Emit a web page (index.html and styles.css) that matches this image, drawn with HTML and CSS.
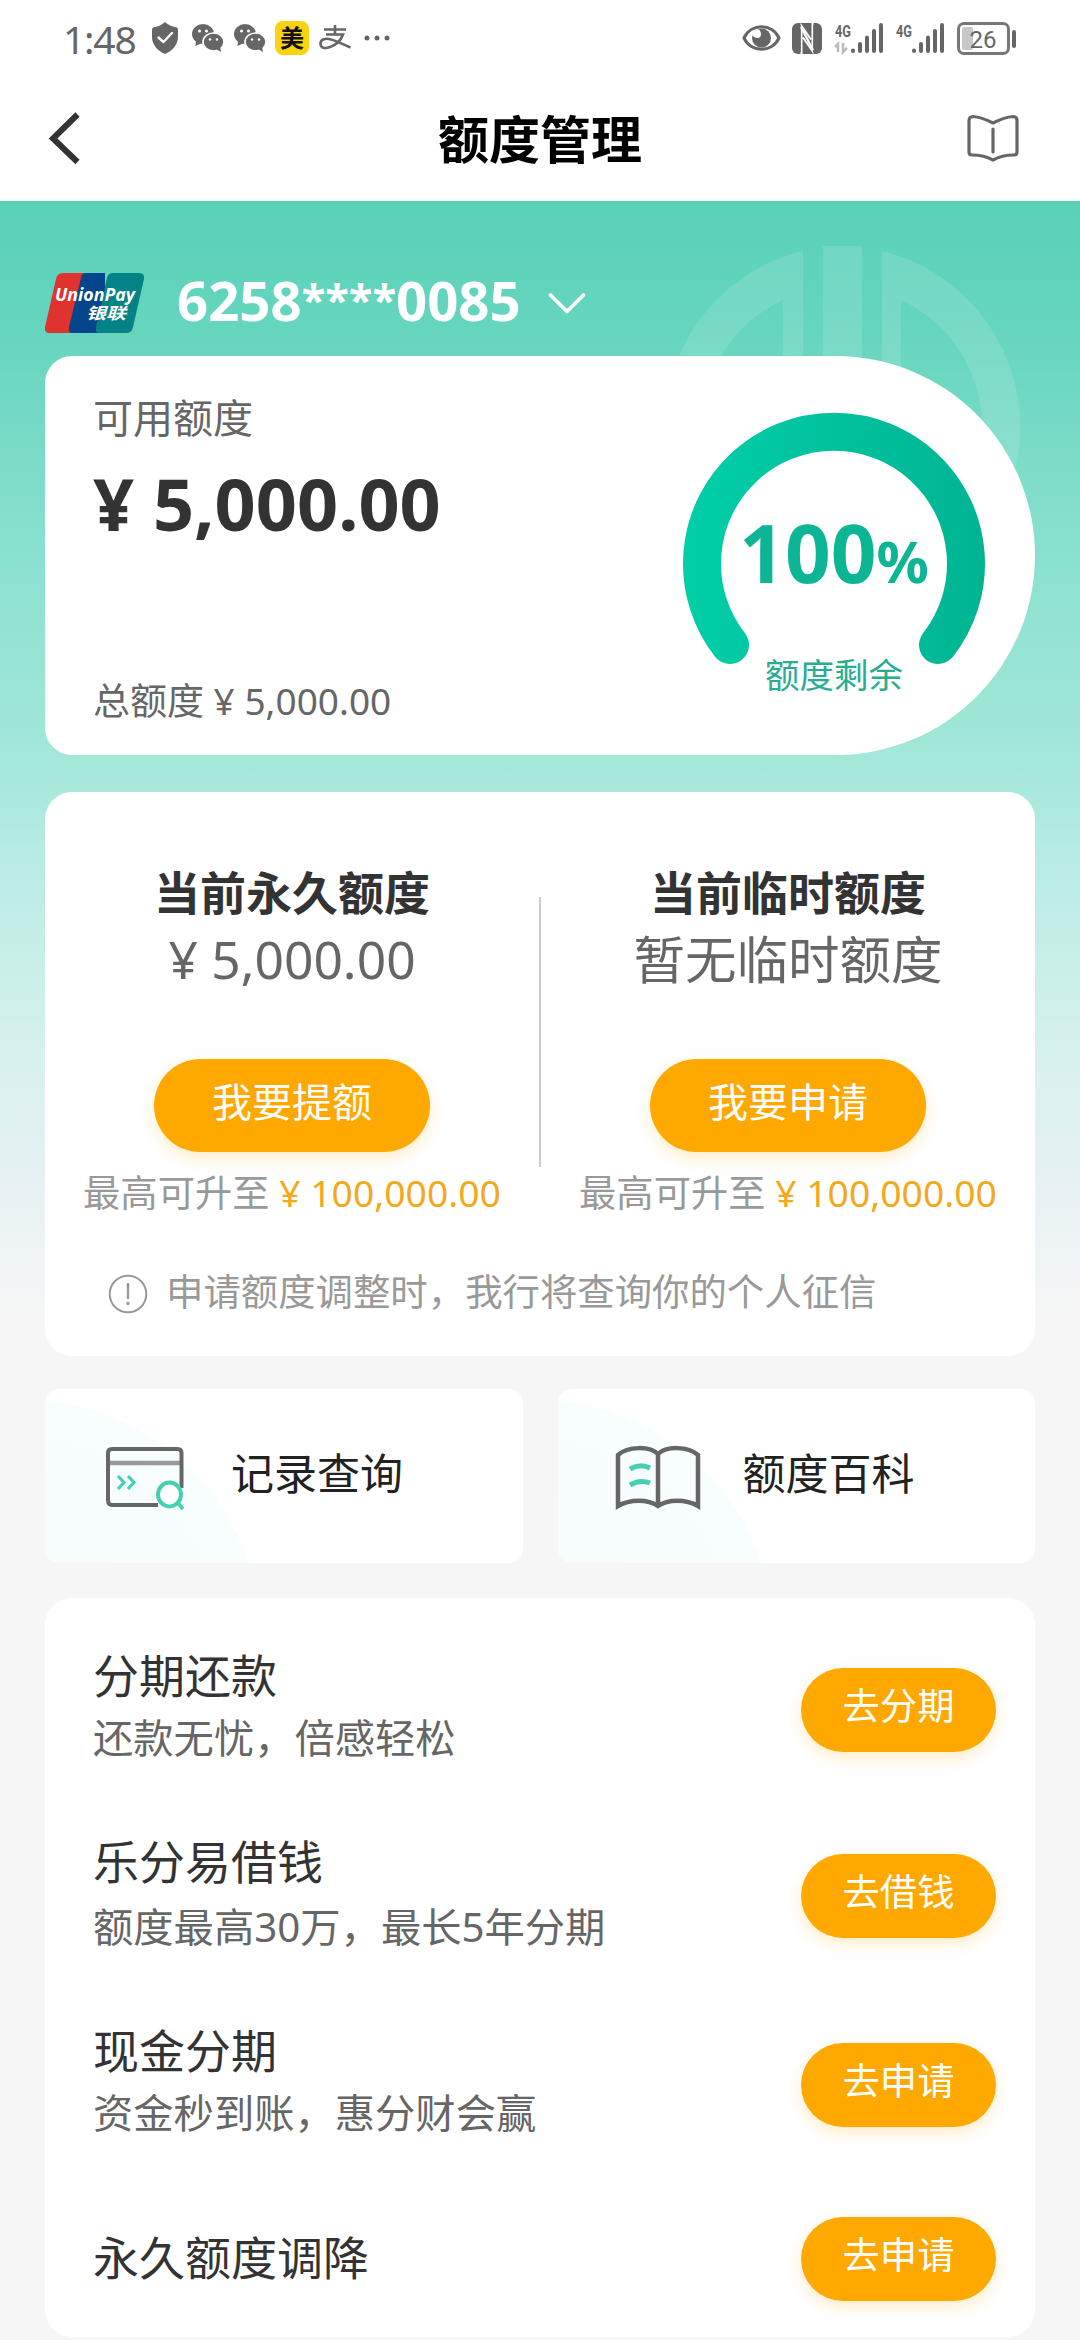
FILE: index.html
```html
<!DOCTYPE html>
<html lang="zh-CN">
<head>
<meta charset="utf-8">
<meta name="viewport" content="width=device-width">
<title>额度管理</title>
<link rel="stylesheet" href="styles.css">
</head>
<body>
<div class="page">
  <header class="top">
    <div class="status">
      <div class="status-left">
        <span class="time">1:48</span>
        <svg class="i-shield" width="26" height="32" viewBox="0 0 26 32"><path d="M13 0C16 3 21 5 25 5.500Q26 6 26 8V15C26 23 20 29 13 32C6 29 0 23 0 15V8Q0 6 1 5.500C5 5 10 3 13 0Z" fill="#666"/><path d="M6.500 15.500L11.500 20L20 11" fill="none" stroke="#fff" stroke-width="2.400" stroke-linecap="round" stroke-linejoin="round"/></svg>
        <svg class="i-chat" width="32" height="28" viewBox="0 0 32 28"><g fill="#666"><ellipse cx="11" cy="10" rx="11" ry="10"/><path d="M4 16L3.500 22L10 19Z"/><ellipse cx="21.500" cy="18" rx="10.500" ry="9" stroke="#fff" stroke-width="1.600"/><path d="M24 25L29 28L28 22Z"/></g><g fill="#fff"><circle cx="7.500" cy="7" r="1.500"/><circle cx="14.500" cy="7" r="1.500"/><circle cx="18" cy="15.500" r="1.200"/><circle cx="25" cy="15.500" r="1.200"/></g></svg>
        <svg class="i-chat2" width="32" height="28" viewBox="0 0 32 28"><g fill="#666"><ellipse cx="11" cy="10" rx="11" ry="10"/><path d="M4 16L3.500 22L10 19Z"/><ellipse cx="21.500" cy="18" rx="10.500" ry="9" stroke="#fff" stroke-width="1.600"/><path d="M24 25L29 28L28 22Z"/></g><g fill="#fff"><circle cx="7.500" cy="7" r="1.500"/><circle cx="14.500" cy="7" r="1.500"/><circle cx="18" cy="15.500" r="1.200"/><circle cx="25" cy="15.500" r="1.200"/></g></svg>
        <span class="badge-mei">美</span>
        <svg class="i-pay" width="32" height="26" viewBox="0 0 32 26"><g fill="none" stroke="#666" stroke-width="2.600"><path d="M16 0V9M5 4.500H27M7 9.500H24C22 15 17 20 11 22C6 24 1.500 23 1.500 18.500C1.500 14 7 13 12 14.500C18 16 25 20 31.500 22.500"/></g></svg>
        <svg class="i-dots" width="26" height="6" viewBox="0 0 26 6"><g fill="#666"><circle cx="3" cy="3" r="2.500"/><circle cx="13" cy="3" r="2.500"/><circle cx="23" cy="3" r="2.500"/></g></svg>
      </div>
      <div class="status-right">
        <svg width="39" height="28" viewBox="0 0 39 28"><path d="M2 14C9 -1 30 -1 37 14C30 29 9 29 2 14Z" fill="none" stroke="#666" stroke-width="3"/><circle cx="19.500" cy="14" r="9.500" fill="#666"/><path d="M10.500 11.500C13 15 19 15 19 10.500C19 7.500 17.500 5.500 16 5.200L11 8Z" fill="#fff"/></svg>
        <svg class="i-nfc" width="30" height="31" viewBox="0 0 30 31"><rect width="30" height="31" rx="6" fill="#666"/><path d="M9.500 31V3L19 16.500M20.500 0V28L11 14.500" fill="none" stroke="#fff" stroke-width="2"/><path d="M8 2V29M22 2V29" stroke="#666" stroke-width="1.500"/><path d="M9 4L21 27" stroke="#fff" stroke-width="2.200"/></svg>
        <svg class="i-net" width="50" height="32" viewBox="0 0 50 32"><text x="1" y="15" font-size="17" textLength="16" lengthAdjust="spacingAndGlyphs" class="net-label">4G</text><path d="M4 30V22L1 25M9 21V30L13 26" fill="none" stroke="#bbb" stroke-width="2.600"/><g stroke="#666" stroke-width="4" stroke-linecap="round"><path d="M19 28.500V29M26 22V29M33 15.500V29M40 9V29M47 3V29"/></g></svg>
        <svg class="i-net2" width="50" height="32" viewBox="0 0 50 32"><text x="1" y="15" font-size="17" textLength="16" lengthAdjust="spacingAndGlyphs" class="net-label">4G</text><g stroke="#666" stroke-width="4" stroke-linecap="round"><path d="M19 28.500V29M26 22V29M33 15.500V29M40 9V29M47 3V29"/></g></svg>
        <svg class="i-bat" width="60" height="33" viewBox="0 0 60 33"><rect x="1.500" y="1.500" width="50" height="30" rx="5.500" fill="none" stroke="#777" stroke-width="3"/><rect x="5" y="5" width="11" height="23" rx="2" fill="#c8c8c8"/><rect x="55" y="8" width="4" height="18" rx="2" fill="#666"/><text x="26" y="25.500" text-anchor="middle" font-size="24" class="bat-label">26</text></svg>
      </div>
    </div>
    <nav class="nav">
      <svg class="back" width="34" height="50" viewBox="0 0 34 50"><path d="M29.500 1.500L5 25.500L29.500 49" fill="none" stroke="#333" stroke-width="6"/></svg>
      <h1>额度管理</h1>
      <svg class="guide" width="52" height="48" viewBox="0 0 52 48"><path d="M26 9C20 6 13 3 6 2.500Q2 2.500 2 7V38Q2 41 5 41C12 41 19 42 26 46C33 42 40 41 47 41Q50 41 50 38V7Q50 2.500 46 2.500C39 3 32 6 26 9Z" fill="none" stroke="#666" stroke-width="3.200" stroke-linejoin="round"/><path d="M26 15V38" stroke="#666" stroke-width="3.200" stroke-linecap="round"/></svg>
    </nav>
  </header>

  <main class="main">
    <svg class="mark" width="362" height="362" viewBox="0 0 362 362"><g fill="#fff"><path fill-rule="evenodd" d="M142 5V361H122V54A140 140 0 0 0 122 308V351A181 181 0 0 1 142 5Z"/><rect x="162" y="0" width="39" height="362"/><path fill-rule="evenodd" d="M221 5V361H240V54A140 140 0 0 1 240 308V351A181 181 0 0 0 221 5Z"/></g></svg>

    <section class="account">
      <svg class="unionpay" width="99" height="60" viewBox="0 0 99 60">
        <clipPath id="up"><path d="M16 0H94Q100 0 99 6L88 54Q87 60 81 60H5Q-1 60 0 54L11 6Q12 0 18 0Z"/></clipPath>
        <g clip-path="url(#up)"><path d="M0 0H40L26 60H0Z" fill="#e0322f"/><path d="M41 0Q37 0 36 5L24 54Q23 60 27 60H60V0Z" fill="#05458c"/><path d="M68 0Q63 0 62 5L51 54Q50 60 54 60H99V0Z" fill="#058285"/></g>
        <text x="10" y="28" font-size="18" textLength="80" lengthAdjust="spacingAndGlyphs" class="up-latin">UnionPay</text>
        <text x="41" y="46" font-size="16" textLength="40" lengthAdjust="spacingAndGlyphs" class="up-cn">银联</text>
      </svg>
      <span class="card-no">6258<span class="stars">****</span>0085</span>
      <svg class="chev" width="40" height="24" viewBox="0 0 40 24"><path d="M3.500 3L20 19.500L36.500 3" fill="none" stroke="#fff" stroke-width="3.800" stroke-linecap="round" stroke-linejoin="round"/></svg>
    </section>

    <section class="card balance">
      <div class="balance-text">
        <div class="label">可用额度</div>
        <div class="amount">¥ 5,000.00</div>
        <div class="total">总额度 ¥ 5,000.00</div>
      </div>
      <div class="gauge">
        <svg width="302" height="302" viewBox="0 0 302 302"><defs><linearGradient id="arc" gradientUnits="userSpaceOnUse" x1="0" y1="0" x2="302" y2="0"><stop offset="0" stop-color="#00cfa8"/><stop offset="1" stop-color="#00b492"/></linearGradient></defs><path d="M47 232A132 132 0 1 1 255 232" fill="none" stroke="url(#arc)" stroke-width="38" stroke-linecap="round"/></svg>
        <div class="gauge-text">
          <div class="percent">100<span>%</span></div>
          <div class="left">额度剩余</div>
        </div>
      </div>
    </section>

    <section class="card limits">
      <div class="limit-cols">
        <div class="limit">
          <h2>当前永久额度</h2>
          <div class="value">¥ 5,000.00</div>
          <button class="btn btn-lg">我要提额</button>
          <p class="hint">最高可升至 <span>¥ 100,000.00</span></p>
        </div>
        <div class="divider"></div>
        <div class="limit">
          <h2>当前临时额度</h2>
          <div class="value">暂无临时额度</div>
          <button class="btn btn-lg">我要申请</button>
          <p class="hint">最高可升至 <span>¥ 100,000.00</span></p>
        </div>
      </div>
      <p class="note">
        <svg width="40" height="40" viewBox="0 0 40 40"><circle cx="20" cy="20" r="18.300" fill="none" stroke="#999" stroke-width="2"/><path d="M20 9V25" stroke="#999" stroke-width="2.400"/><circle cx="20" cy="29.500" r="1.700" fill="#999"/></svg>
        <span>申请额度调整时，我行将查询你的个人征信</span>
      </p>
    </section>

    <section class="tiles">
      <a class="tile">
        <svg class="tile-icon" width="84" height="64" viewBox="0 0 84 64"><path d="M4 18H77" stroke="#999" stroke-width="4.500"/><path d="M77.500 43V8Q77.500 4 73.500 4H8Q4 4 4 8V55Q4 60 8 60H54" fill="none" stroke="#666" stroke-width="4"/><path d="M14 31L20 37.500L14 44M24 31L30 37.500L24 44" fill="none" stroke="#45d0b2" stroke-width="3.200"/><ellipse cx="65.500" cy="49.500" rx="11.500" ry="12" fill="#fff" stroke="#45d0b2" stroke-width="4"/><path d="M73 57L79 64" stroke="#45d0b2" stroke-width="3.500"/></svg>
        <span>记录查询</span>
      </a>
      <a class="tile tile-wiki">
        <svg class="tile-icon" width="84" height="64" viewBox="0 0 84 64"><path d="M42 9C34 1 12 1 2 10V61C14 54 32 54 42 61C52 54 70 54 82 61V10C72 1 50 1 42 9ZM42 9V61" fill="none" stroke="#666" stroke-width="4.500"/><path d="M14 24Q24 18 34 23M14 40Q24 34 34 38" fill="none" stroke="#45d0b2" stroke-width="5"/></svg>
        <span>额度百科</span>
      </a>
    </section>

    <section class="card services">
      <div class="row">
        <div><h3>分期还款</h3><p>还款无忧，倍感轻松</p></div>
        <button class="btn btn-sm">去分期</button>
      </div>
      <div class="row row-loan">
        <div><h3>乐分易借钱</h3><p>额度最高30万，最长5年分期</p></div>
        <button class="btn btn-sm">去借钱</button>
      </div>
      <div class="row row-cash">
        <div><h3>现金分期</h3><p>资金秒到账，惠分财会赢</p></div>
        <button class="btn btn-sm">去申请</button>
      </div>
      <div class="row row-single">
        <div><h3>永久额度调降</h3></div>
        <button class="btn btn-sm">去申请</button>
      </div>
    </section>
  </main>
</div>
</body>
</html>
```
FILE: styles.css
```css
* { box-sizing: border-box; margin: 0; padding: 0; }

body {
  width: 1080px;
  background: #f6f6f6;
  font-family: "Noto Sans", "Noto Sans CJK SC", sans-serif;
  color: #333;
}

svg { display: block; flex: none; overflow: visible; }
button { border: 0; font-family: inherit; }

.page { height: 2340px; overflow: hidden; }

/* Status bar and title */
.top { height: 201px; background: #fff; }

.status {
  height: 76px;
  display: flex;
  justify-content: space-between;
  padding: 0 63px 0 63px;
  color: #666;
}
.status-left, .status-right { display: flex; align-items: center; }
.time { width: 89px; font-size: 39px; line-height: 76px; letter-spacing: -1.2px; margin-top: 1px; }
.i-chat { margin-left: 14px; }
.i-chat2 { margin-left: 10px; }
.badge-mei {
  width: 34px;
  height: 34px;
  margin-left: 9px;
  border-radius: 8px;
  background: #fbd20f;
  color: #111;
  font-size: 24px;
  font-weight: 700;
  line-height: 33px;
  text-align: center;
}
.i-pay { margin-left: 10px; }
.i-dots { margin-left: 13px; }
.i-nfc { margin-left: 11px; }
.i-net { margin-left: 12px; }
.i-net2 { margin-left: 11px; }
.i-bat { margin-left: 12px; }
.net-label { font-family: "Roboto", sans-serif; font-weight: 700; fill: #666; }
.bat-label { font-family: "Roboto", sans-serif; fill: #666; }

.nav {
  height: 125px;
  display: flex;
  align-items: center;
  justify-content: space-between;
  padding: 0 61px 0 48px;
}
.nav h1 { font-size: 51px; line-height: 70px; font-weight: 700; color: #000; margin-left: 31px; }
.back { margin-top: -2px; }
.guide { margin-top: -2px; }

/* Page body on the green fade */
.main {
  position: relative;
  padding: 0 45px;
  background: linear-gradient(180deg, #59d1b8 0, #66d5be 130px, #88e0ce 339px, #a5e8d9 569px, #b8ece3 659px, #caefe9 769px, #ddf1f0 899px, #e5f1f4 969px, #eff4f5 1049px, #f6f6f6 1119px);
}
.mark { position: absolute; left: 661px; top: 45px; opacity: .12; }

.account { position: relative; height: 155px; padding-top: 72px; display: flex; }
.up-latin { font-family: "Open Sans", sans-serif; font-weight: 700; font-style: italic; fill: #fff; }
.up-cn { font-family: "Noto Sans CJK SC", sans-serif; font-weight: 700; font-style: italic; fill: #fff; }
.card-no {
  margin: -13px 0 0 33px;
  width: 350px;
  font-size: 54.5px;
  line-height: 80px;
  font-weight: 700;
  color: #fff;
  white-space: nowrap;
}
.stars { font-size: 43.5px; line-height: 1; vertical-align: 5px; }
.chev { margin: 19px 0 0 20px; }

.card { position: relative; background: #fff; border-radius: 27px; }

/* Available balance */
.balance {
  height: 399px;
  padding-left: 48px;
  display: flex;
  justify-content: space-between;
  border-radius: 27px 200px 200px 27px;
}
.balance-text { padding-top: 32px; }
.label { font-size: 40px; line-height: 60px; color: #666; }
.amount { margin-top: 15px; font-size: 72px; line-height: 80px; font-weight: 700; }
.total { margin-top: 133px; font-size: 37px; line-height: 50px; color: #666; }

.gauge { width: 302px; height: 302px; margin: 57px 50px 0 0; display: grid; }
.gauge > * { grid-area: 1 / 1; }
.gauge-text { padding-top: 94px; text-align: center; color: #0cb593; }
.percent { height: 90px; font-size: 80px; line-height: 90px; font-weight: 700; white-space: nowrap; }
.percent span { font-size: 58px; line-height: 1; }
.left { margin-top: 53px; font-size: 34.5px; line-height: 50px; color: #26ad92; }

/* Permanent and temporary limits */
.limits { height: 564px; margin-top: 37px; padding-top: 71px; }
.limit-cols { display: grid; grid-template-columns: 1fr 2px 1fr; }
.limit { display: flex; flex-direction: column; align-items: center; }
.divider { height: 270px; margin-top: 34px; background: #ccc; }
.limit h2 { font-size: 46px; line-height: 60px; font-weight: 700; margin-top: -1px; }
.value { margin-top: 7px; font-size: 51.5px; line-height: 60px; color: #666; }
.hint { margin-top: 16px; font-size: 37.3px; line-height: 50px; color: #999; white-space: nowrap; }
.hint span { color: #f3a81e; }
.note {
  display: flex;
  align-items: center;
  gap: 18px;
  margin-top: 53px;
  padding-left: 63px;
  font-size: 37.4px;
  line-height: 50px;
  color: #999;
}
.note span { margin-top: -4px; }

.btn {
  background: #ffa800;
  color: #fff;
  border-radius: 50px;
  text-align: center;
  box-shadow: 0 6px 16px rgba(255, 168, 0, .22);
}
.btn-lg { width: 276px; height: 93px; margin-top: 70px; padding-bottom: 8px; font-size: 40px; line-height: 85px; }
.btn-sm { flex: none; width: 195px; height: 84px; padding-bottom: 8px; font-size: 37.3px; line-height: 76px; margin-top: 22px; }

/* Shortcuts */
.tiles { margin-top: 33px; display: grid; grid-template-columns: 1fr 1fr; gap: 35px; }
.tile {
  height: 174px;
  display: flex;
  align-items: center;
  padding: 2px 0 0 59px;
  border-radius: 14px;
  background: radial-gradient(circle at -24px 250px, #f5fbfb 0, #f8fdfe 239px, #fff 241px);
  font-size: 43px;
  line-height: 60px;
  color: #222;
}
.tile span { margin: -7px 0 0 43px; }
.tile-wiki { padding-left: 58px; }

/* Services */
.services { height: 739px; margin-top: 35px; padding: 48px 39px 0 48px; }
.row { display: flex; justify-content: space-between; height: 186px; }
.row h3 { font-size: 46px; line-height: 60px; font-weight: 400; margin-top: -1px; }
.row p { margin-top: 8px; font-size: 40.3px; line-height: 50px; color: #666; }
.row-loan { height: 189px; }
.row-loan p { margin-top: 11px; }
.row-cash { height: 174px; }
.row-single h3 { margin-top: 32px; }
```
